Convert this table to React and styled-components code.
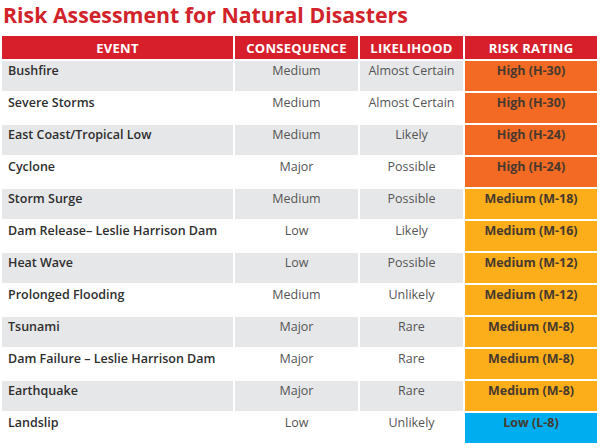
import styled, { createGlobalStyle } from 'styled-components';

const GlobalStyle = createGlobalStyle`
  html, body {
    margin: 0;
    padding: 0;
    background: #ffffff;
  }
`;

const Page = styled.div`
  width: 600px;
  height: 448px;
  padding: 2px 0 0 2px;
  box-sizing: border-box;
  font-family: "Open Sans", "Liberation Sans", sans-serif;
  color: #3a3a3a;
  overflow: hidden;
`;

const Title = styled.h1`
  margin: 0 0 0 1px;
  height: 34px;
  font-family: "Open Sans", sans-serif;
  font-weight: 700;
  font-size: 21.3px;
  line-height: 26px;
  color: #d2232a;
`;

const Table = styled.div`
  display: grid;
  grid-template-columns: 231px 123px 103px 132px;
  grid-auto-rows: 30px;
  grid-template-rows: 23px;
  gap: 2px;
  width: 595px;
`;

const HeadCell = styled.div`
  background: #d71f2b;
  color: #ffffff;
  font-weight: 700;
  font-size: 13px;
  letter-spacing: 0.3px;
  display: flex;
  align-items: center;
  justify-content: center;
`;

const Cell = styled.div`
  background: ${p => (p.$shaded ? '#e6e7e8' : '#ffffff')};
  font-size: 12.5px;
  line-height: 18px;
  padding-top: 1px;
  text-align: ${p => (p.$left ? 'left' : 'center')};
  padding-left: ${p => (p.$left ? '6px' : '0')};
  font-weight: ${p => (p.$left ? 600 : 400)};
  color: ${p => (p.$left ? '#2e2e2e' : '#555555')};
`;

const ratingColors = {
  H: '#f26a24',
  M: '#fbad1a',
  L: '#00aeef',
};

const Rating = styled.div`
  background: ${p => ratingColors[p.$level]};
  font-size: 12.5px;
  line-height: 18px;
  padding-top: 1px;
  text-align: center;
  font-weight: 700;
  color: #47392e;
`;

const rows = [
  ['Bushfire', 'Medium', 'Almost Certain', 'High (H-30)'],
  ['Severe Storms', 'Medium', 'Almost Certain', 'High (H-30)'],
  ['East Coast/Tropical Low', 'Medium', 'Likely', 'High (H-24)'],
  ['Cyclone', 'Major', 'Possible', 'High (H-24)'],
  ['Storm Surge', 'Medium', 'Possible', 'Medium (M-18)'],
  ['Dam Release\u2013 Leslie Harrison Dam', 'Low', 'Likely', 'Medium (M-16)'],
  ['Heat Wave', 'Low', 'Possible', 'Medium (M-12)'],
  ['Prolonged Flooding', 'Medium', 'Unlikely', 'Medium (M-12)'],
  ['Tsunami', 'Major', 'Rare', 'Medium (M-8)'],
  ['Dam Failure \u2013 Leslie Harrison Dam', 'Major', 'Rare', 'Medium (M-8)'],
  ['Earthquake', 'Major', 'Rare', 'Medium (M-8)'],
  ['Landslip', 'Low', 'Unlikely', 'Low (L-8)'],
];

export default function App() {
  return (
    <Page>
      <GlobalStyle />
      <Title>Risk Assessment for Natural Disasters</Title>
      <Table>
        <HeadCell>EVENT</HeadCell>
        <HeadCell>CONSEQUENCE</HeadCell>
        <HeadCell>LIKELIHOOD</HeadCell>
        <HeadCell>RISK RATING</HeadCell>
        {rows.map(([event, cons, like, rating], i) => {
          const shaded = i % 2 === 0;
          return [
            <Cell key={`e${i}`} $left $shaded={shaded}>{event}</Cell>,
            <Cell key={`c${i}`} $shaded={shaded}>{cons}</Cell>,
            <Cell key={`l${i}`} $shaded={shaded}>{like}</Cell>,
            <Rating key={`r${i}`} $level={rating[rating.indexOf('(') + 1]}>{rating}</Rating>,
          ];
        })}
      </Table>
    </Page>
  );
}
